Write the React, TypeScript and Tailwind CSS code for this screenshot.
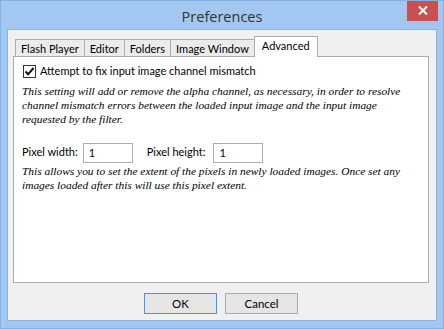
import React from 'react';

const ui = { fontFamily: 'Lato, "Liberation Sans", sans-serif' };
const serif = { fontFamily: '"Liberation Serif", "DejaVu Serif", serif' };

function Tab({ label, active }: { label: string; active?: boolean }) {
  if (active) {
    return (
      <div className="relative z-10 -ml-px h-[21px] px-[7px] bg-white border border-b-0 border-[#acacac] text-[11px] leading-[17px] text-black">
        {label}
      </div>
    );
  }
  return (
    <div className="-ml-px first:ml-0 h-[18px] px-[5px] bg-[#ebebeb] border border-b-0 border-[#acacac] text-[11px] leading-[18px] text-black">
      {label}
    </div>
  );
}

export default function App() {
  return (
    <div className="w-[444px] h-[329px] bg-[#a2c8f2] border border-[#86b0e2] flex flex-col px-[6px] pb-[7px] overflow-hidden" style={ui}>
      <div className="relative h-[28px] flex items-center justify-center">
        <span className="text-[14.5px] text-[#333] mt-[3px]" style={{ fontFamily: '"Open Sans", sans-serif' }}>Preferences</span>
        <div className="absolute right-[-1px] top-[-1px] w-[31px] h-[21px] bg-[#c75050] flex items-center justify-center">
          <svg width="10" height="9" viewBox="0 0 10 9">
            <path d="M1 0.5 L9 8.5 M9 0.5 L1 8.5" stroke="white" strokeWidth="2" />
          </svg>
        </div>
      </div>

      <div className="flex-1 bg-[#f0f0f0] border border-[#8eb3dd] flex flex-col pl-[5px] pr-[7px] pt-[6px] pb-[6px]">
        <div className="flex items-end pl-[2px] -mb-px">
          <Tab label="Flash Player" />
          <Tab label="Editor" />
          <Tab label="Folders" />
          <Tab label="Image Window" />
          <Tab label="Advanced" active />
        </div>
        <div className="h-[227px] bg-white border border-[#adadad] pl-[9px] pr-[6px] pt-[6px]">
          <label className="flex items-center gap-[3px] text-[11px] text-black">
            <span className="w-[13px] h-[13px] border border-[#333] bg-white flex items-center justify-center">
              <svg width="11" height="11" viewBox="0 0 11 11">
                <path d="M1.5 5.5 L4.2 8.3 L9.5 2" stroke="#111" strokeWidth="2" fill="none" />
              </svg>
            </span>
            <span className="ml-[1px]">Attempt to fix input image channel mismatch</span>
          </label>
          <p className="mt-[4px] -ml-[1px] text-[11.4px] italic leading-[14px] text-black" style={serif}>
            This setting will add or remove the alpha channel, as necessary, in order to resolve channel mismatch errors between the loaded input image and the input image requested by the filter.
          </p>
          <div className="mt-[17px] -ml-[1px] flex items-center text-[11px] text-black">
            <span>Pixel width:</span>
            <div className="ml-[5px] w-[50px] h-[20px] border border-[#abadb3] px-[5px] leading-[18px]">1</div>
            <span className="ml-[14px]">Pixel height:</span>
            <div className="ml-[8px] w-[50px] h-[20px] border border-[#abadb3] px-[5px] leading-[18px]">1</div>
          </div>
          <p className="mt-[1px] -ml-[1px] text-[11.4px] italic leading-[14.5px] text-black" style={serif}>
            This allows you to set the extent of the pixels in newly loaded images. Once set any images loaded after this will use this pixel extent.
          </p>
        </div>
        <div className="flex-1 flex items-end justify-center gap-[8px]">
          <button className="w-[73px] h-[21px] bg-[#e5e5e5] border border-[#3399ff] text-[11.5px] text-black">OK</button>
          <button className="w-[73px] h-[21px] bg-[#e5e5e5] border border-[#acacac] text-[11.5px] text-black">Cancel</button>
        </div>
      </div>
    </div>
  );
}
